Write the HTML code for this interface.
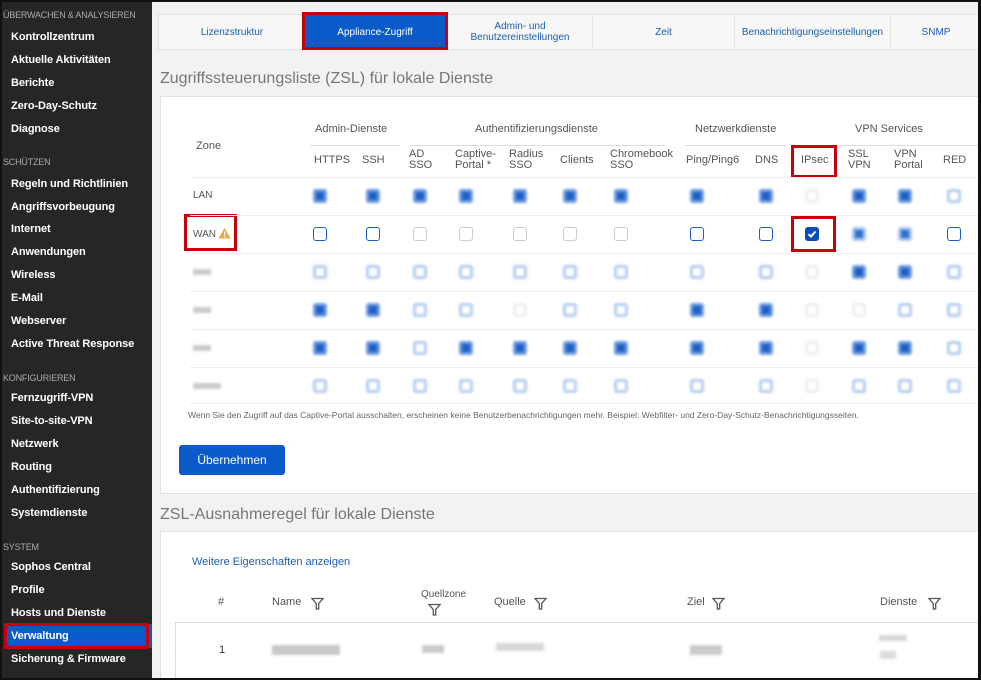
<!DOCTYPE html>
<html><head><meta charset="utf-8"><style>
*{margin:0;padding:0;box-sizing:border-box}
html{width:981px;height:680px;overflow:hidden}
body{width:981px;height:680px;overflow:hidden;font-family:"Liberation Sans",sans-serif;background:#f2f2f2;position:relative}
#frame{position:absolute;left:0;top:0;width:981px;height:680px;border:2px solid #111;border-right-width:3px;z-index:50;pointer-events:none}
#side{position:absolute;left:0;top:0;width:152px;height:680px;background:#262626}
.sh{position:absolute;left:3px;font-size:9px;color:#aaa;letter-spacing:-.2px}
.si{position:absolute;left:11px;font-size:11px;font-weight:bold;color:#fff;letter-spacing:-.1px}
.a{position:absolute}
.t{position:absolute;font-size:11px;color:#333}
.cb{position:absolute;width:14px;height:14px;border-radius:3px}
.tab{position:absolute;top:15px;height:34px;font-size:10px;color:#1a5fb4;display:flex;align-items:center;justify-content:center;text-align:center;line-height:11px;border-right:1px solid #e4e4e4}
.red{position:absolute;border:3px solid #c8000a}
.hl{position:absolute;background:#eee;height:1px}
.bl{filter:blur(1.2px)}
</style></head><body>
<div id="frame"></div>
<div id="side">
<div class="sh" style="top:10px">ÜBERWACHEN &amp; ANALYSIEREN</div>
<div class="si" style="top:31px">Kontrollzentrum</div>
<div class="si" style="top:54px">Aktuelle Aktivitäten</div>
<div class="si" style="top:77px">Berichte</div>
<div class="si" style="top:100px">Zero-Day-Schutz</div>
<div class="si" style="top:123px">Diagnose</div>
<div class="sh" style="top:157px">SCHÜTZEN</div>
<div class="si" style="top:178px">Regeln und Richtlinien</div>
<div class="si" style="top:201px">Angriffsvorbeugung</div>
<div class="si" style="top:223px">Internet</div>
<div class="si" style="top:246px">Anwendungen</div>
<div class="si" style="top:269px">Wireless</div>
<div class="si" style="top:292px">E-Mail</div>
<div class="si" style="top:315px">Webserver</div>
<div class="si" style="top:338px">Active Threat Response</div>
<div class="sh" style="top:373px">KONFIGURIEREN</div>
<div class="si" style="top:392px">Fernzugriff-VPN</div>
<div class="si" style="top:415px">Site-to-site-VPN</div>
<div class="si" style="top:438px">Netzwerk</div>
<div class="si" style="top:461px">Routing</div>
<div class="si" style="top:484px">Authentifizierung</div>
<div class="si" style="top:507px">Systemdienste</div>
<div class="sh" style="top:542px">SYSTEM</div>
<div class="si" style="top:561px">Sophos Central</div>
<div class="si" style="top:584px">Profile</div>
<div class="si" style="top:607px">Hosts und Dienste</div>
<div class="a" style="left:4px;top:624px;width:148px;height:24px;background:#0a5bc9"></div>
<div class="red" style="left:4px;top:623px;width:145px;height:26px"></div>
<div class="si" style="top:630px">Verwaltung</div>
<div class="si" style="top:653px">Sicherung &amp; Firmware</div>
</div>

<div class="a" style="left:158px;top:14px;width:823px;height:36px;background:#f7f7f7;border:1px solid #e2e2e2"></div>
<div class="tab" style="left:160px;width:145px">Lizenzstruktur</div>
<div class="a" style="left:304px;top:13px;width:142px;height:36px;background:#0a5bc9"></div>
<div class="red" style="left:302px;top:12px;width:146px;height:38px"></div>
<div class="tab" style="left:304px;width:142px;color:#fff;border:none">Appliance-Zugriff</div>
<div class="tab" style="left:448px;width:145px">Admin- und<br>Benutzereinstellungen</div>
<div class="tab" style="left:593px;width:142px">Zeit</div>
<div class="tab" style="left:735px;width:156px">Benachrichtigungseinstellungen</div>
<div class="tab" style="left:891px;width:90px;border:none">SNMP</div>

<div class="a" style="left:160px;top:70px;font-size:16px;color:#777">Zugriffssteuerungsliste (ZSL) für lokale Dienste</div>
<div class="a" style="left:160px;top:96px;width:821px;height:398px;background:#fff;border:1px solid #e2e2e2"></div>

<div class="t" style="left:196px;top:140px;color:#555">Zone</div>
<div class="t" style="left:315px;top:123px;color:#555">Admin-Dienste</div>
<div class="t" style="left:475px;top:123px;color:#555">Authentifizierungsdienste</div>
<div class="t" style="left:695px;top:123px;color:#555">Netzwerkdienste</div>
<div class="t" style="left:855px;top:123px;color:#555">VPN Services</div>
<div class="hl" style="left:310px;top:145px;width:90px;background:#ddd"></div>
<div class="hl" style="left:410px;top:145px;width:255px;background:#ddd"></div>
<div class="hl" style="left:685px;top:145px;width:100px;background:#ddd"></div>
<div class="hl" style="left:795px;top:145px;width:186px;background:#ddd"></div>
<div id="hdr"></div>
<div class="red" style="left:791px;top:145px;width:46px;height:33px"></div>
<div class="red" style="left:184px;top:214px;width:53px;height:37px"></div>
<div class="t" style="left:193px;top:190px;font-size:10px;color:#555">LAN</div>
<div class="t" style="left:193px;top:229px;font-size:10px;color:#555">WAN</div>
<svg class="a" style="left:218px;top:227px" width="13" height="12"><path d="M6.5 1L12.5 11.5H0.5Z" fill="#f4a641"/><rect x="6" y="4.5" width="1.2" height="4" fill="#fff"/><rect x="6" y="9.3" width="1.2" height="1.2" fill="#fff"/></svg>
<div id="grid"></div>
<div class="red" style="left:791px;top:216px;width:45px;height:36px"></div>

<div class="a" style="left:188px;top:410px;font-size:8.5px;color:#666">Wenn Sie den Zugriff auf das Captive-Portal ausschalten, erscheinen keine Benutzerbenachrichtigungen mehr. Beispiel: Webfilter- und Zero-Day-Schutz-Benachrichtigungsseiten.</div>
<div class="a" style="left:179px;top:445px;width:106px;height:30px;background:#0a5bc9;border-radius:3px;color:#fff;font-size:12px;display:flex;align-items:center;justify-content:center">Übernehmen</div>

<div class="a" style="left:160px;top:506px;font-size:16px;color:#777">ZSL-Ausnahmeregel für lokale Dienste</div>
<div class="a" style="left:160px;top:531px;width:821px;height:149px;background:#fff;border:1px solid #e2e2e2;border-bottom:none"></div>
<div class="a" style="left:192px;top:556px;font-size:11px;color:#1a5fb4">Weitere Eigenschaften anzeigen</div>
<div class="t" style="left:218px;top:596px;color:#555">#</div>
<div class="t" style="left:272px;top:596px;color:#555">Name</div>
<div class="t" style="left:421px;top:589px;color:#555;font-size:10px">Quellzone</div>
<div class="t" style="left:494px;top:596px;color:#555">Quelle</div>
<div class="t" style="left:687px;top:596px;color:#555">Ziel</div>
<div class="t" style="left:880px;top:596px;color:#555">Dienste</div>
<div id="fil"></div>
<div class="a" style="left:175px;top:622px;width:806px;height:58px;border:1px solid #ddd;border-right:none;border-bottom:none"></div>
<div class="t" style="left:219px;top:644px">1</div>
<div class="a bl" style="left:272px;top:645px;width:68px;height:10px;background:#c8c8c8"></div>
<div class="a bl" style="left:422px;top:645px;width:22px;height:8px;background:#ccc"></div>
<div class="a bl" style="left:496px;top:643px;width:48px;height:8px;background:#d8d8d8"></div>
<div class="a bl" style="left:690px;top:645px;width:32px;height:10px;background:#ccc"></div>
<div class="a bl" style="left:879px;top:635px;width:28px;height:6px;background:#d8d8d8"></div>
<div class="a bl" style="left:880px;top:651px;width:16px;height:8px;background:#ddd"></div>

<script>
var cx=[320,373,420,466,520,570,621,697,766,812,859,905,954];
var hd=["HTTPS","SSH","AD<br>SSO","Captive-<br>Portal *","Radius<br>SSO","Clients","Chromebook<br>SSO","Ping/Ping6","DNS","IPsec","SSL<br>VPN","VPN<br>Portal","RED"];
var hx=[314,362,409,455,509,560,610,686,755,801,848,894,943];
var h="";
for(var i=0;i<13;i++){var two=hd[i].indexOf("<br>")>0;h+='<div class="t" style="left:'+hx[i]+'px;top:'+(two?149:155)+'px;line-height:11px;color:#555">'+hd[i]+'</div>';}
document.getElementById("hdr").innerHTML=h;
var rows=[[177,"SSSSSSSSSFSSL"],[215,null],[253,"LLLLLLLLLFSSL"],[291,"SSLLFLLSSFFLL"],[329,"SSLSSSSSSFSSL"],[367,"LLLLLLLLLFLLL"]];
var g="";
rows.forEach(function(r,ri){
 var y=r[0];
 g+='<div class="hl" style="left:190px;top:'+y+'px;width:791px"></div>';
 if(ri>=2)g+='<div class="a bl" style="left:193px;top:'+(y+16)+'px;width:'+(ri==5?28:18)+'px;height:6px;background:#ccc"></div>';
 for(var i=0;i<13;i++){
  var x=cx[i]-7,yy=y+12;
  if(r[1]==null){
   var st=[1,1,0,0,0,0,0,1,1,2,3,3,1][i];
   if(st==0)g+='<div class="cb" style="left:'+x+'px;top:'+yy+'px;border:1px solid #ccc"></div>';
   else if(st==1)g+='<div class="cb" style="left:'+x+'px;top:'+yy+'px;border:1.5px solid #1f5fbf"></div>';
   else if(st==2)g+='<div class="cb" style="left:'+x+'px;top:'+yy+'px;background:#0a4fb5"><svg width="14" height="14"><path d="M3.5 7.2L6 9.5L10.5 4.5" stroke="#fff" stroke-width="2" fill="none"/></svg></div>';
   else g+='<div class="cb bl" style="left:'+x+'px;top:'+yy+'px;background:#2f6fcf;border:3px solid #a8c4ee"></div>';
  } else {
   var c=r[1][i];
   if(c=="S")g+='<div class="cb bl" style="left:'+x+'px;top:'+yy+'px;background:#1f5fc4;border:3px solid #6f9be0"></div>';
   else if(c=="L")g+='<div class="cb bl" style="left:'+x+'px;top:'+yy+'px;background:#fff;border:3px solid #b5cdf0"></div>';
   else g+='<div class="cb bl" style="left:'+x+'px;top:'+yy+'px;background:#fff;border:3px solid #eee"></div>';
  }
 }
});
g+='<div class="hl" style="left:190px;top:403px;width:791px"></div>';
document.getElementById("grid").innerHTML=g;
var fx=[311,428,534,712,928],fy=[597,603,597,597,597],f="";
for(var i=0;i<5;i++)f+='<svg class="a" style="left:'+fx[i]+'px;top:'+fy[i]+'px" width="13" height="13"><path d="M1 1.5H12L7.7 6.5V12H5.3V6.5Z" fill="none" stroke="#555" stroke-width="1.3"/></svg>';
document.getElementById("fil").innerHTML=f;
</script>
</body></html>
